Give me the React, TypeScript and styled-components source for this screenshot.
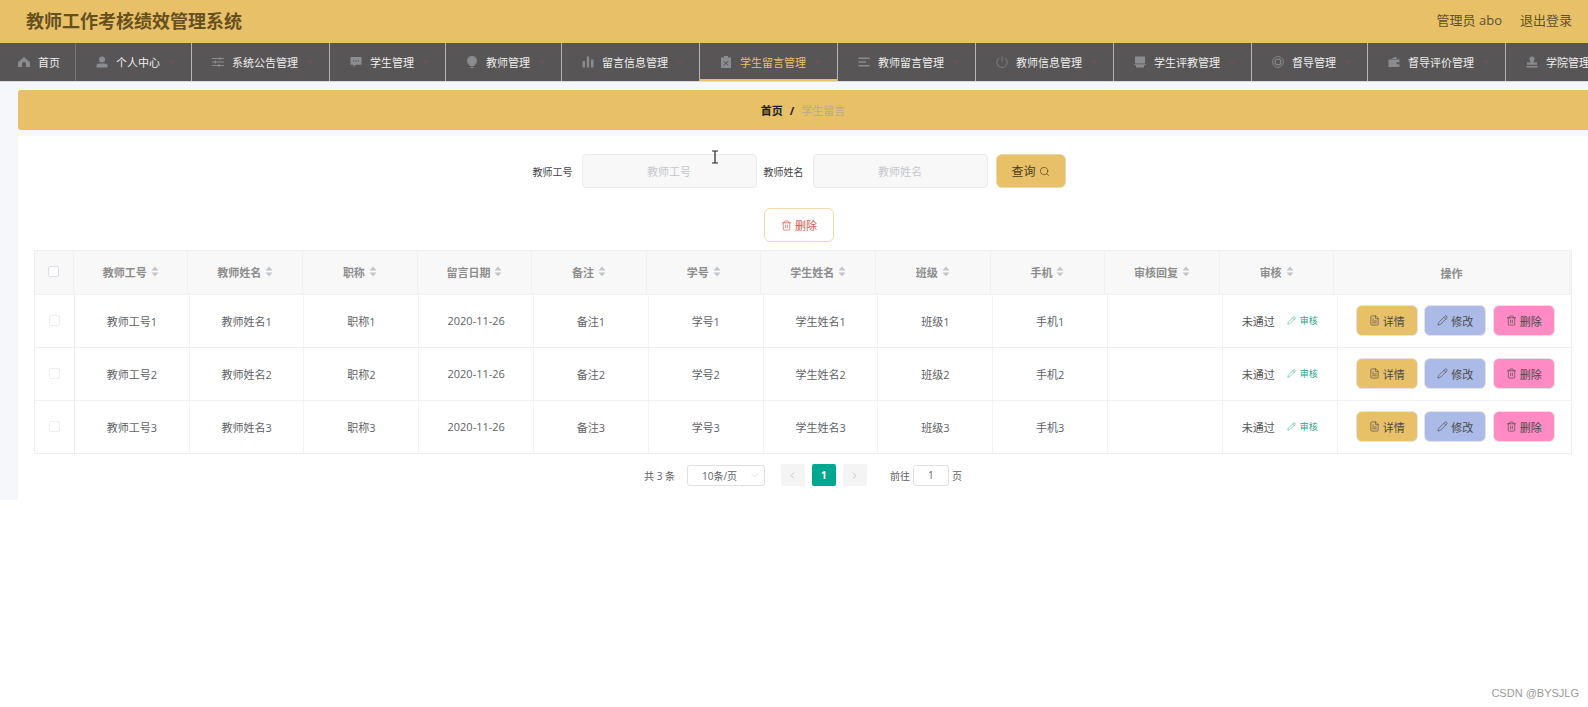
import React from "react";
import styled, { createGlobalStyle } from "styled-components";
import { ChevronDown, ChevronLeft, ChevronRight, FileText, Pencil, Search, Trash2 } from "lucide-react";

const GlobalStyle = createGlobalStyle`
    html, body {
        margin: 0;
        padding: 0;
        background: #fff;
    }
    * {
        box-sizing: border-box;
    }
    body {
        font-family: "Open Sans", "Noto Sans CJK SC", sans-serif;
    }
`;

const navIcons: Record<string, React.ReactNode> = {
    home: <path d="M6 1 L12 6.2 V11 H8 V8 a2 2 0 0 0 -4 0 V11 H0 V6.2 Z" fill="currentColor" />,
    user: <path d="M6 0.5 a3 3 0 0 1 0 6 a3 3 0 0 1 0 -6 Z M0.5 11.5 V10 a3 2.4 0 0 1 3 -2.4 h5 a3 2.4 0 0 1 3 2.4 v1.5 Z" fill="currentColor" />,
    sliders: <path d="M0 2.5 H12 M0 6 H12 M0 9.5 H12 M8 1 V4 M3.5 4.5 V7.5 M7 8 V11" stroke="currentColor" strokeWidth="1.1" fill="none" />,
    message: <path d="M0.5 1 H11.5 V8.8 H6 L3.5 11 V8.8 H0.5 Z M3 4.2 V5.4 H4.2 V4.2 Z M5.4 4.2 V5.4 H6.6 V4.2 Z M7.8 4.2 V5.4 H9 V4.2 Z" fill="currentColor" fillRule="evenodd" />,
    bulb: <path d="M6 0 a5 5 0 0 1 5 5 c0 2.2 -2 3.4 -2.8 5 H3.8 C3 8.4 1 7.2 1 5 a5 5 0 0 1 5 -5 Z M4.5 10.8 H7.5 V12 H4.5 Z" fill="currentColor" />,
    chart: <path d="M0.5 5 H3 V11.5 H0.5 Z M4.8 0.5 H7.2 V11.5 H4.8 Z M9 3.5 H11.5 V11.5 H9 Z" fill="currentColor" />,
    clip: <path d="M4 0 H8 V1.5 H11 V12 H1 V1.5 H4 Z M4 4.8 L3.4 5.4 L5.4 7.2 L3.4 9 L4 9.6 L6 7.8 L8 9.6 L8.6 9 L6.6 7.2 L8.6 5.4 L8 4.8 L6 6.6 Z" fill="currentColor" fillRule="evenodd" />,
    list: <path d="M0.5 1.5 H11.5 V3 H0.5 Z M0.5 5.2 H8 V6.7 H0.5 Z M0.5 9 H11.5 V10.5 H0.5 Z" fill="currentColor" />,
    power: <path d="M6 0.5 V5.5 M3.4 1.8 a5.2 5.2 0 1 0 5.2 0" stroke="currentColor" strokeWidth="0.8" fill="none" />,
    print: <path d="M1 0.5 H11 V7.5 H1 Z M0 8.3 H12 V9.3 H10 V11.5 H2 V9.3 H0 Z" fill="currentColor" />,
    ring: <g stroke="currentColor" fill="none"><circle cx="6" cy="6" r="5.4" strokeWidth="0.9" /><circle cx="6" cy="6" r="3" strokeWidth="1.2" /></g>,
    wallet: <path d="M0.5 3.5 H11.5 V11 H0.5 Z M3 3 L8 0.8 L9 3 Z M8.5 6.2 V8.2 H11.5 V6.2 Z" fill="currentColor" fillRule="evenodd" />,
    stamp: <path d="M6 0.5 a2.5 2.5 0 0 1 2.5 2.5 c0 1.5 -1.2 2.2 -1.2 3.6 H11 V8.8 H1 V6.6 H4.7 C4.7 5.2 3.5 4.5 3.5 3 A2.5 2.5 0 0 1 6 0.5 Z M0.5 10 H11.5 V11.5 H0.5 Z" fill="currentColor" />,
};

const navItems = [
    { label: "个人中心", icon: "user" },
    { label: "系统公告管理", icon: "sliders" },
    { label: "学生管理", icon: "message" },
    { label: "教师管理", icon: "bulb" },
    { label: "留言信息管理", icon: "chart" },
    { label: "学生留言管理", icon: "clip", active: true },
    { label: "教师留言管理", icon: "list" },
    { label: "教师信息管理", icon: "power" },
    { label: "学生评教管理", icon: "print" },
    { label: "督导管理", icon: "ring" },
    { label: "督导评价管理", icon: "wallet" },
    { label: "学院管理", icon: "stamp" },
];

const columns = ["教师工号", "教师姓名", "职称", "留言日期", "备注", "学号", "学生姓名", "班级", "手机", "审核回复", "审核"];

const rows = [1, 2, 3].map((n) => [
    `教师工号${n}`,
    `教师姓名${n}`,
    `职称${n}`,
    "2020-11-26",
    `备注${n}`,
    `学号${n}`,
    `学生姓名${n}`,
    `班级${n}`,
    `手机${n}`,
    "",
]);

const NavGlyph = ({ name }: { name: string }) => (
    <NavIcon viewBox="0 0 12 12">{navIcons[name]}</NavIcon>
);

const SortCaret = () => (
    <Caret viewBox="0 0 8 11">
        <path d="M4 0.5 L7.5 4.5 H0.5 Z M0.5 6.5 H7.5 L4 10.5 Z" fill="currentColor" />
    </Caret>
);

export default function App() {
    return (
        <Page>
            <GlobalStyle />
            <Header>
                <Title>教师工作考核绩效管理系统</Title>
                <UserBox>
                    <span>管理员 abo</span>
                    <span>退出登录</span>
                </UserBox>
            </Header>
            <Nav>
                <HomeItem>
                    <NavGlyph name="home" />
                    <span>首页</span>
                </HomeItem>
                {navItems.map((item) => (
                    <NavItem key={item.label} $active={item.active}>
                        <NavGlyph name={item.icon} />
                        <span>{item.label}</span>
                        <NavArrow>
                            <ChevronDown size={10} strokeWidth={1.6} />
                        </NavArrow>
                    </NavItem>
                ))}
            </Nav>
            <Main>
                <Breadcrumb>
                    <strong>首页</strong>
                    <BreadSep>/</BreadSep>
                    <BreadCurrent>学生留言</BreadCurrent>
                </Breadcrumb>
                <Panel>
                    <SearchForm>
                        <FieldLabel>教师工号</FieldLabel>
                        <FieldInput placeholder="教师工号" />
                        <FieldLabel>教师姓名</FieldLabel>
                        <FieldInput placeholder="教师姓名" />
                        <QueryButton>
                            查询 <Search size={11} strokeWidth={1.4} />
                        </QueryButton>
                    </SearchForm>
                    <BulkRow>
                        <BulkDelete>
                            <Trash2 size={11} strokeWidth={1.5} />
                            删除
                        </BulkDelete>
                    </BulkRow>
                    <Table>
                        <HeadRow>
                            <HeadCell>
                                <Check />
                            </HeadCell>
                            {columns.map((c) => (
                                <HeadCell key={c}>
                                    {c}
                                    <SortCaret />
                                </HeadCell>
                            ))}
                            <ActionHead>操作</ActionHead>
                        </HeadRow>
                        {rows.map((row, i) => (
                            <BodyRow key={i}>
                                <BodyCell>
                                    <Check $light />
                                </BodyCell>
                                {row.map((v, j) => (
                                    <BodyCell key={j}>{v}</BodyCell>
                                ))}
                                <BodyCell>
                                    <Status>未通过</Status>
                                    <ReviewLink>
                                        <Pencil size={9} strokeWidth={1.4} />
                                        审核
                                    </ReviewLink>
                                </BodyCell>
                                <ActionCell>
                                    <ActionButton $bg="#e8c067">
                                        <FileText size={11} strokeWidth={1.4} />
                                        详情
                                    </ActionButton>
                                    <ActionButton $bg="#abbae6">
                                        <Pencil size={11} strokeWidth={1.4} />
                                        修改
                                    </ActionButton>
                                    <ActionButton $bg="#ff8ac4">
                                        <Trash2 size={11} strokeWidth={1.4} />
                                        删除
                                    </ActionButton>
                                </ActionCell>
                            </BodyRow>
                        ))}
                    </Table>
                    <Pagination>
                        <PageText>共 3 条</PageText>
                        <SizeSelect>
                            10条/页
                            <SelectArrow>
                                <ChevronDown size={11} strokeWidth={1.2} />
                            </SelectArrow>
                        </SizeSelect>
                        <PagerGroup>
                            <PagerButton>
                                <ChevronLeft size={11} strokeWidth={1.6} />
                            </PagerButton>
                            <PagerButton $current>1</PagerButton>
                            <PagerButton>
                                <ChevronRight size={11} strokeWidth={1.6} />
                            </PagerButton>
                        </PagerGroup>
                        <JumpGroup>
                            前往
                            <JumpInput>1</JumpInput>
                            页
                        </JumpGroup>
                    </Pagination>
                </Panel>
            </Main>
            <TextCursor viewBox="0 0 8 14">
                <path d="M1 1 H7 M4 1 V13 M1 13 H7" stroke="#222" strokeWidth="1.2" fill="none" />
            </TextCursor>
            <Watermark>CSDN @BYSJLG</Watermark>
        </Page>
    );
}

const Page = styled.div`
    position: relative;
    width: 100%;
    height: 707px;
    overflow: hidden;
    background: #fff;
`;

const Header = styled.header`
    height: 43px;
    background: #e8c067;
    display: flex;
    align-items: center;
    justify-content: space-between;
    padding: 0 16px 4px 26px;
`;

const Title = styled.h1`
    margin: 0;
    font-size: 18px;
    font-weight: 700;
    color: #66501f;
`;

const UserBox = styled.div`
    display: flex;
    gap: 18px;
    font-size: 13px;
    color: #5f5030;
`;

const Nav = styled.nav`
    height: 39px;
    background: #575555;
    border-bottom: 1px solid #dcdcdc;
    display: flex;
    overflow: hidden;
`;

const NavIcon = styled.svg`
    width: 12px;
    height: 12px;
    flex-shrink: 0;
    color: #8b8c90;
`;

const HomeItem = styled.div`
    flex-shrink: 0;
    width: 76px;
    display: flex;
    align-items: center;
    gap: 8px;
    padding-left: 18px;
    font-size: 11px;
    color: #eee;
    border-right: 1px solid #777;
`;

const NavItem = styled.div<{ $active?: boolean }>`
    flex-shrink: 0;
    display: flex;
    align-items: center;
    gap: 8px;
    padding: 0 14px 0 20px;
    font-size: 11px;
    color: ${(p) => (p.$active ? "#e8c067" : "#eee")};
    border-right: 1px solid #b5b5b5;
    box-shadow: ${(p) => (p.$active ? "inset 0 -2px 0 #e8c067" : "none")};
`;

const NavArrow = styled.span`
    display: flex;
    margin-left: -1px;
    color: #a3476e;
`;

const Main = styled.main`
    height: 418px;
    background: #f5f7fa;
    padding: 8px 0 0 18px;
    display: flex;
    flex-direction: column;
`;

const Breadcrumb = styled.div`
    height: 40px;
    flex-shrink: 0;
    background: #e8c067;
    border-radius: 3px 0 0 3px;
    display: flex;
    align-items: center;
    justify-content: center;
    font-size: 11px;
    color: #222;
`;

const BreadSep = styled.span`
    margin: 0 7px;
    font-weight: 700;
`;

const BreadCurrent = styled.span`
    color: #b5ab8d;
`;

const Panel = styled.section`
    flex: 1;
    margin-top: 6px;
    background: #fff;
    padding: 18px 16px 0;
`;

const SearchForm = styled.div`
    display: flex;
    align-items: center;
    justify-content: center;
    padding-right: 8px;
`;

const FieldLabel = styled.label`
    font-size: 10px;
    color: #444;
    margin-right: 9px;
`;

const FieldInput = styled.input`
    width: 175px;
    height: 34px;
    margin-right: 7px;
    border: 1px solid #e9ebef;
    border-radius: 4px;
    background: #f8f8f8;
    text-align: center;
    font-size: 11px;
    font-family: inherit;
    outline: none;
    &::placeholder {
        color: #c4c6cc;
    }
`;

const QueryButton = styled.button`
    width: 70px;
    height: 34px;
    margin-left: 1px;
    border: 1px solid #e8d9ad;
    border-radius: 6px;
    background: #e8c067;
    color: #4a3c1c;
    font-size: 12px;
    font-family: inherit;
    display: flex;
    align-items: center;
    justify-content: center;
    gap: 3px;
`;

const BulkRow = styled.div`
    display: flex;
    justify-content: center;
    padding-right: 8px;
    margin-top: 20px;
`;

const BulkDelete = styled.button`
    width: 70px;
    height: 34px;
    border: 1px solid #efdcaa;
    border-radius: 6px;
    background: #fff;
    color: #d9584a;
    font-size: 11px;
    font-family: inherit;
    display: flex;
    align-items: center;
    justify-content: center;
    gap: 3px;
`;

const Table = styled.div`
    margin-top: 8px;
    border: 1px solid #edeef2;
    border-right-width: 1px;
`;

const HeadRow = styled.div`
    display: grid;
    grid-template-columns: 38.9px repeat(11, 114.6px) 235.4px;
    height: 42.5px;
    background: #f8f8f8;
    border-right: 1px solid transparent;
`;

const HeadCell = styled.div`
    display: flex;
    align-items: center;
    justify-content: center;
    gap: 4px;
    font-size: 11px;
    font-weight: 700;
    color: #8d8d8d;
    border-right: 1px solid #eff0f3;
    padding-bottom: 1px;
`;

const ActionHead = styled(HeadCell)`
    padding: 2px 0 0;
`;

const Caret = styled.svg`
    width: 8px;
    height: 11px;
    color: #c4c6cc;
`;

const Check = styled.span<{ $light?: boolean }>`
    display: block;
    width: 11px;
    height: 11px;
    background: #fff;
    border: 1px solid ${(p) => (p.$light ? "#eeeeee" : "#dcdfe6")};
    border-radius: 2px;
`;

const BodyRow = styled.div`
    display: grid;
    grid-template-columns: 39.9px repeat(11, 114.8px) 1fr;
    height: 53.2px;
    border-top: 1px solid #f0f1f4;
`;

const BodyCell = styled.div`
    display: flex;
    align-items: center;
    justify-content: center;
    font-size: 11px;
    color: #606266;
    border-right: 1px solid #f2f3f5;
    &:first-child {
        border-right-color: #eaebef;
    }
`;

const Status = styled.span`
    color: #555;
    margin-right: 12px;
`;

const ReviewLink = styled.span`
    display: flex;
    align-items: center;
    gap: 4px;
    font-size: 9px;
    color: #2aa58e;
`;

const ActionCell = styled.div`
    display: flex;
    align-items: center;
    gap: 6.5px;
    padding-left: 18px;
`;

const ActionButton = styled.button<{ $bg: string }>`
    width: 62px;
    height: 31px;
    border: 1px solid #e4e4e4;
    border-radius: 6px;
    background: ${(p) => p.$bg};
    color: #4a4a4a;
    font-size: 11px;
    font-family: inherit;
    padding: 0;
    display: flex;
    align-items: center;
    justify-content: center;
    gap: 3px;
`;

const Pagination = styled.div`
    margin-top: 10px;
    height: 22px;
    display: flex;
    align-items: center;
    justify-content: center;
    font-size: 10px;
    color: #606266;
`;

const PageText = styled.span`
    margin-right: 12px;
`;

const SizeSelect = styled.div`
    position: relative;
    width: 78px;
    height: 21px;
    border: 1px solid #dfe1e6;
    border-radius: 3px;
    padding-left: 14px;
    display: flex;
    align-items: center;
`;

const SelectArrow = styled.span`
    position: absolute;
    right: 4px;
    top: 4px;
    display: flex;
    color: #c0c4cc;
`;

const PagerGroup = styled.div`
    display: flex;
    gap: 7px;
    margin-left: 16px;
`;

const PagerButton = styled.div<{ $current?: boolean }>`
    width: 24px;
    height: 22px;
    border-radius: 2px;
    display: flex;
    align-items: center;
    justify-content: center;
    font-weight: 700;
    background: ${(p) => (p.$current ? "#00a88f" : "#f4f4f5")};
    color: ${(p) => (p.$current ? "#fff" : "#b5b7bb")};
`;

const JumpGroup = styled.div`
    display: flex;
    align-items: center;
    gap: 3px;
    margin-left: 23px;
`;

const JumpInput = styled.div`
    width: 36px;
    height: 21px;
    border: 1px solid #dfe1e6;
    border-radius: 3px;
    display: flex;
    align-items: center;
    justify-content: center;
`;

const TextCursor = styled.svg`
    position: absolute;
    left: 711px;
    top: 150px;
    width: 8px;
    height: 14px;
`;

const Watermark = styled.div`
    position: absolute;
    right: 9px;
    bottom: 8px;
    font-size: 11px;
    color: #9a9a9a;
    font-family: "Liberation Sans", sans-serif;
`;
